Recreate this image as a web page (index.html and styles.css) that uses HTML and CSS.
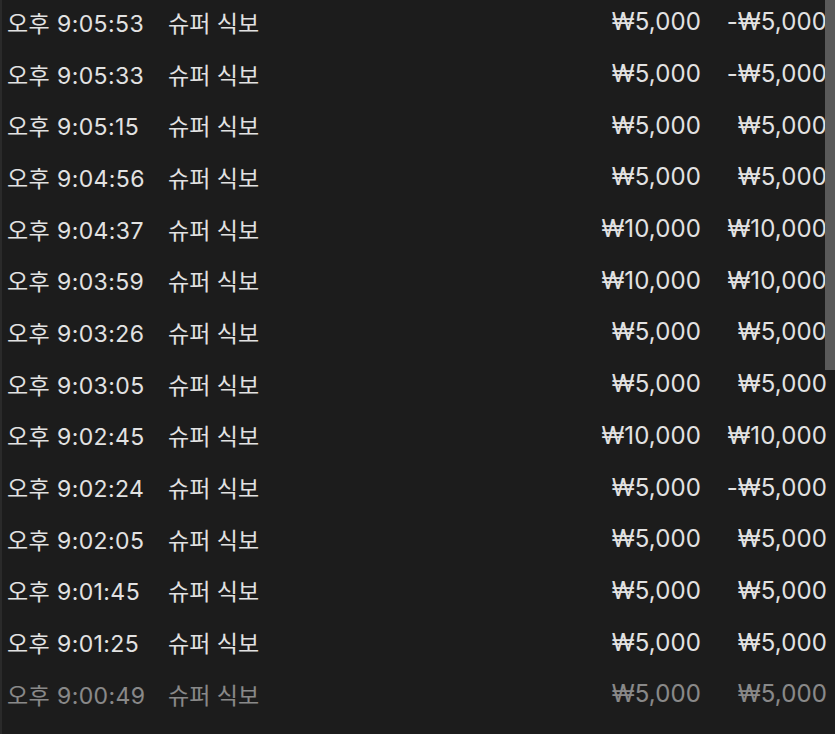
FILE: index.html
```html
<!DOCTYPE html>
<html lang="ko">
<head>
<meta charset="utf-8">
<link rel="stylesheet" href="styles.css">
</head>
<body>
<div class="screen">
  <div class="list">
    <div class="row"><span class="time">오후 9:05:53</span><span class="name">슈퍼 식보</span><span class="amt">₩5,000</span><span class="amt">-₩5,000</span></div>
    <div class="row"><span class="time">오후 9:05:33</span><span class="name">슈퍼 식보</span><span class="amt">₩5,000</span><span class="amt">-₩5,000</span></div>
    <div class="row"><span class="time">오후 9:05:15</span><span class="name">슈퍼 식보</span><span class="amt">₩5,000</span><span class="amt">₩5,000</span></div>
    <div class="row"><span class="time">오후 9:04:56</span><span class="name">슈퍼 식보</span><span class="amt">₩5,000</span><span class="amt">₩5,000</span></div>
    <div class="row"><span class="time">오후 9:04:37</span><span class="name">슈퍼 식보</span><span class="amt">₩10,000</span><span class="amt">₩10,000</span></div>
    <div class="row"><span class="time">오후 9:03:59</span><span class="name">슈퍼 식보</span><span class="amt">₩10,000</span><span class="amt">₩10,000</span></div>
    <div class="row"><span class="time">오후 9:03:26</span><span class="name">슈퍼 식보</span><span class="amt">₩5,000</span><span class="amt">₩5,000</span></div>
    <div class="row"><span class="time">오후 9:03:05</span><span class="name">슈퍼 식보</span><span class="amt">₩5,000</span><span class="amt">₩5,000</span></div>
    <div class="row"><span class="time">오후 9:02:45</span><span class="name">슈퍼 식보</span><span class="amt">₩10,000</span><span class="amt">₩10,000</span></div>
    <div class="row"><span class="time">오후 9:02:24</span><span class="name">슈퍼 식보</span><span class="amt">₩5,000</span><span class="amt">-₩5,000</span></div>
    <div class="row"><span class="time">오후 9:02:05</span><span class="name">슈퍼 식보</span><span class="amt">₩5,000</span><span class="amt">₩5,000</span></div>
    <div class="row"><span class="time">오후 9:01:45</span><span class="name">슈퍼 식보</span><span class="amt">₩5,000</span><span class="amt">₩5,000</span></div>
    <div class="row"><span class="time">오후 9:01:25</span><span class="name">슈퍼 식보</span><span class="amt">₩5,000</span><span class="amt">₩5,000</span></div>
    <div class="row faded"><span class="time">오후 9:00:49</span><span class="name">슈퍼 식보</span><span class="amt">₩5,000</span><span class="amt">₩5,000</span></div>
  </div>
  <div class="scrollbar"></div>
</div>
</body>
</html>
```
FILE: styles.css
```css
html, body {
  margin: 0;
  padding: 0;
  background: #1c1c1c;
}
.screen {
  position: relative;
  width: 835px;
  height: 734px;
  overflow: hidden;
  background: #1c1c1c;
  border-left: 2px solid #2a2a2a;
  box-sizing: border-box;
  font-family: "Inter", "Noto Sans CJK KR", sans-serif;
  font-size: 23px;
  color: #e2e2e2;
}
.list {
  margin-top: -4px;
  padding: 0 8px 0 5px;
}
.row {
  display: grid;
  grid-template-columns: 161px 1fr 140px 126px;
  align-items: center;
  height: 51.7px;
  white-space: nowrap;
}
.time {
  letter-spacing: 0.4px;
}
.amt {
  text-align: right;
  font-size: 24px;
  letter-spacing: 0.1px;
}
.row.faded {
  opacity: 0.55;
}
.scrollbar {
  position: absolute;
  top: 0;
  right: 0;
  width: 10px;
  height: 370px;
  background: #5a5a5a;
}
```
